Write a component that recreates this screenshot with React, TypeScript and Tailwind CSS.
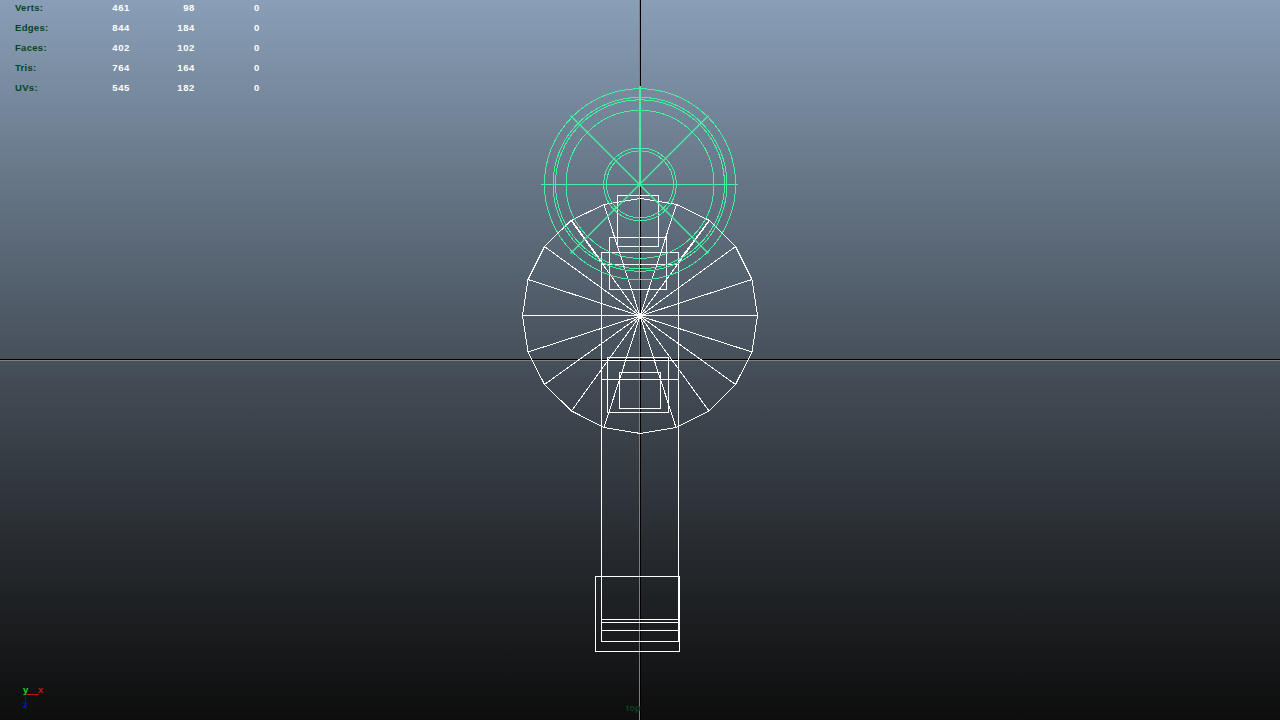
import React from "react";

const stats: [string, string, string, string][] = [
  ["Verts:", "461", "98", "0"],
  ["Edges:", "844", "184", "0"],
  ["Faces:", "402", "102", "0"],
  ["Tris:", "764", "164", "0"],
  ["UVs:", "545", "182", "0"],
];

const rim: [number, number][] = [
  [640.5, 198.5], [676.5, 204.5], [709.5, 220.5], [735.5, 246.5], [752, 279.5],
  [757.5, 315.5], [752, 352], [735.5, 384.5], [709, 411], [676, 427.5],
  [640.5, 433.5], [604, 427.5], [571.5, 411], [544.5, 384.5], [528, 352],
  [522.5, 315.5], [528, 279.5], [544.5, 246.5], [571, 220.5], [604, 204.5],
];

const rings = [95.6, 87, 84.5, 74, 36.4, 33.5];

const boxes: [number, number, number, number][] = [
  [617.5, 195.5, 41, 51],
  [609.5, 237.5, 57, 52],
  [601.5, 252.5, 77, 388.5],
  [607.5, 357.5, 61, 55],
  [619.5, 372.5, 41, 36],
  [595.5, 576.5, 84, 75],
];

function Wireframe() {
  return (
    <svg className="absolute inset-0" width="1280" height="720" fill="none" strokeWidth="1" shapeRendering="crispEdges">
      <path d="M0 359.5H1280M640.5 0V720" stroke="#000" />
      <path d="M0 360.5H1280M639.5 0V720" stroke="#808080" />
      <g stroke="#fff">
        <polygon points={rim.map((p) => p.join(",")).join(" ")} />
        {rim.map(([x, y], i) =>
          i % 10 === 0 ? null : <line key={i} x1="640" y1="316" x2={x} y2={y} />
        )}
        {boxes.map(([x, y, w, h], i) => (
          <rect key={i} x={x} y={y} width={w} height={h} />
        ))}
        <path d="M601 264.5H679M601 360.5H679M601 379.5H679M601 619.5H679M601 622.5H679M601 630.5H679" />
        <path d="M572 220.5L602 262M709 220.5L678 262" />
      </g>
      <g stroke="#46f0a0">
        {rings.map((r) => (
          <circle key={r} cx="640" cy="184.3" r={r} />
        ))}
        <path d="M541 184.5H738" />
        <path d="M570.5 115.5L708.5 253.5M708.5 115.5L570.5 253.5" strokeWidth="1.4" shapeRendering="geometricPrecision" />
        <path d="M639.5 86V280M640.5 86V184" />
      </g>
    </svg>
  );
}

export default function App() {
  return (
    <main className="relative h-[720px] w-[1280px] overflow-hidden bg-linear-to-b from-[#899fb7] to-[#0d0d0d] font-['Liberation_Sans',Arial,sans-serif] text-[9.5px] font-bold tracking-[0.5px]">
      <Wireframe />
      <div className="relative flex w-[261px] flex-col pl-[15px] pt-px">
        {stats.map(([name, a, b, c], i) => (
          <div key={i} className="mt-[-3px] mb-[3px] grid h-5 grid-cols-[65px_50px_65px_65px] items-center text-right tracking-[0.6px] text-white">
            <span className="text-left tracking-[0.3px] text-[#064524]">{name}</span>
            <span>{a}</span>
            <span>{b}</span>
            <span>{c}</span>
          </div>
        ))}
      </div>
      <span className="absolute left-[626px] top-[701px] leading-[14px] tracking-normal text-[#0b3f20]">top</span>
      <svg className="absolute bottom-0 left-0" width="60" height="50" fill="none" shapeRendering="crispEdges">
        <path d="M26 24.5H39" stroke="#c01616" />
        <path d="M25.5 25V39" stroke="#0808f0" />
      </svg>
      <span className="absolute left-[23px] top-[683px] leading-[14px] text-[#20d820]">y</span>
      <span className="absolute left-[38px] top-[683px] leading-[14px] text-[#c81616]">x</span>
      <span className="absolute left-[23px] top-[698px] leading-[14px] text-[#0808f0]">z</span>
    </main>
  );
}
